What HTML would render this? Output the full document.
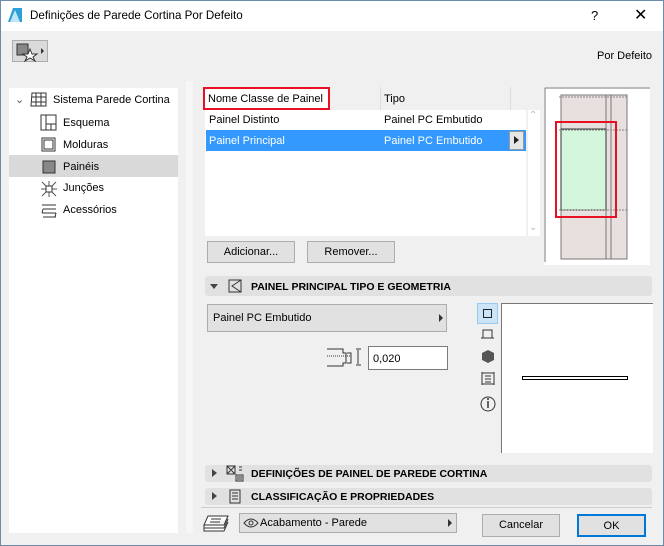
<!DOCTYPE html>
<html><head><meta charset="utf-8"><style>
*{margin:0;padding:0;box-sizing:border-box}
body{width:664px;height:546px;overflow:hidden;font-family:"Liberation Sans",sans-serif;font-size:11px;color:#000;background:#f0f0f0;position:relative}
.a{position:absolute}
.win{left:0;top:0;width:664px;height:546px;border:1px solid #6d8bab;}
.btn{position:absolute;background:#e1e1e1;border:1px solid #adadad;text-align:center;line-height:20px}
.sec{position:absolute;left:205px;width:447px;background:#e1e1e1;border-radius:3px}
.hd{position:absolute;font-weight:bold;font-size:10.5px}
.tri{position:absolute;width:0;height:0}
</style></head><body>
<div class="a win"></div>
<div class="a" style="left:1px;top:1px;width:662px;height:30px;background:#fff"></div>
<svg class="a" style="left:7px;top:7px" width="16" height="16"><path d="M1 15 L6 1 L15 1 L15 15 Z" fill="#2a9fd8"/><path d="M3 15 L8 3 L13 15" fill="#bfe6f7"/></svg>
<div class="a" style="left:30px;top:9px;font-size:11.6px">Definições de Parede Cortina Por Defeito</div>
<div class="a" style="left:591px;top:8px;font-size:13px">?</div>
<div class="a" style="left:634px;top:5px;font-size:16px">✕</div>
<div class="a" style="left:12px;top:40px;width:36px;height:22px;background:#dadada;border:1px solid #adadad"></div>
<svg class="a" style="left:14px;top:42px" width="34" height="20"><rect x="3" y="2" width="11" height="11" fill="#888" stroke="#333"/><path d="M16 7 L18 12 L23 12 L19 15 L21 19 L16 16 L11 19 L13 15 L9 12 L14 12Z" fill="#fff" stroke="#333"/><path d="M27 6 L30 9 L27 12Z" fill="#333"/></svg>
<div class="a" style="left:597px;top:50px">Por Defeito</div>
<div class="a" style="left:9px;top:88px;width:169px;height:445px;background:#fff"></div>
<div class="a" style="left:9px;top:155px;width:169px;height:22px;background:#d9d9d9"></div>
<div class="a" style="left:15px;top:93px;font-size:11px;color:#555">⌄</div>
<svg class="a" style="left:30px;top:92px" width="18" height="16"><path d="M2 1h14v13H1z M2 5h14 M2 10h14 M6 1v13 M11 1v13" fill="none" stroke="#333"/></svg>
<div class="a" style="left:53px;top:94px">Sistema Parede Cortina</div>
<svg class="a" style="left:40px;top:114px" width="18" height="18"><path d="M1 1h15v15H1z M6 1v15 M6 10h10 M11 10v6" fill="none" stroke="#333"/></svg>
<div class="a" style="left:63px;top:117px">Esquema</div>
<svg class="a" style="left:40px;top:136px" width="18" height="18"><path d="M2 2h13v13H2z M4 4h9v9H4z" fill="none" stroke="#333"/></svg>
<div class="a" style="left:63px;top:139px">Molduras</div>
<svg class="a" style="left:40px;top:158px" width="18" height="18"><rect x="3" y="3" width="12" height="12" fill="#888" stroke="#333"/></svg>
<div class="a" style="left:63px;top:161px">Painéis</div>
<svg class="a" style="left:40px;top:180px" width="18" height="18"><path d="M2 2l14 14 M16 2L2 16 M9 1v16 M1 9h16" stroke="#555"/><rect x="6" y="6" width="6" height="6" fill="#fff" stroke="#333"/></svg>
<div class="a" style="left:63px;top:182px">Junções</div>
<svg class="a" style="left:40px;top:202px" width="18" height="18"><path d="M2 3h14 M3 7h13 M2 11h14 M3 15h13 M3 7l-1 4 M16 11l-1 4" stroke="#333" fill="none"/></svg>
<div class="a" style="left:63px;top:204px">Acessórios</div>
<div class="a" style="left:186px;top:81px;width:7px;height:452px;background:#f6f6f6"></div>
<div class="a" style="left:205px;top:87px;width:321px;height:149px;background:#fff"></div>
<div class="a" style="left:205px;top:87px;width:334px;height:23px;background:#f0f0f0"></div>
<div class="a" style="left:380px;top:87px;width:1px;height:23px;background:#ddd"></div>
<div class="a" style="left:510px;top:87px;width:1px;height:23px;background:#ddd"></div>
<div class="a" style="left:203px;top:87px;width:127px;height:23px;border:2px solid #e81123;background:#fff"></div>
<div class="a" style="left:208px;top:93px">Nome Classe de Painel</div>
<div class="a" style="left:384px;top:93px">Tipo</div>
<div class="a" style="left:209px;top:114px">Painel Distinto</div>
<div class="a" style="left:384px;top:114px">Painel PC Embutido</div>
<div class="a" style="left:206px;top:130px;width:320px;height:21px;background:#3399ff"></div>
<div class="a" style="left:209px;top:135px;color:#fff">Painel Principal</div>
<div class="a" style="left:384px;top:135px;color:#fff">Painel PC Embutido</div>
<div class="a" style="left:509px;top:131px;width:15px;height:19px;background:#e6e6e6;border:1px solid #999"></div>
<div class="tri" style="left:514px;top:136px;border-left:5px solid #222;border-top:4px solid transparent;border-bottom:4px solid transparent"></div>
<div class="a" style="left:528px;top:110px;width:12px;height:126px;background:#fff"></div>
<div class="a" style="left:529px;top:110px;font-size:10px;color:#bbb">⌃</div>
<div class="a" style="left:529px;top:222px;font-size:10px;color:#bbb">⌄</div>
<svg class="a" style="left:544px;top:87px" width="106" height="178"><rect x="0" y="0" width="106" height="178" fill="#fff"/><path d="M1 175V1h105" stroke="#777" fill="none"/><rect x="17" y="8" width="66" height="164" fill="#e8e0df" stroke="#777"/><path d="M62 8v164 M67 8v164" stroke="#777"/><rect x="17" y="42" width="45" height="81" fill="#d4f6dd" stroke="#333"/><path d="M15 10h68 M15 43h68 M15 123h68" stroke="#888" stroke-dasharray="2 1"/><rect x="12" y="35" width="60" height="95" fill="none" stroke="#e81123" stroke-width="2"/></svg>
<div class="btn" style="left:207px;top:241px;width:88px;height:22px">Adicionar...</div>
<div class="btn" style="left:307px;top:241px;width:88px;height:22px">Remover...</div>
<div class="sec" style="top:276px;height:20px"></div>
<div class="tri" style="left:210px;top:284px;border-top:5px solid #444;border-left:4px solid transparent;border-right:4px solid transparent"></div>
<svg class="a" style="left:228px;top:279px" width="14" height="14"><path d="M1 1h12v12H1z M13 1L4 7l9 6" fill="none" stroke="#333"/></svg>
<div class="hd" style="left:251px;top:281px">PAINEL PRINCIPAL TIPO E GEOMETRIA</div>
<div class="btn" style="left:207px;top:304px;width:240px;height:28px;text-align:left;padding-left:5px;line-height:26px">Painel PC Embutido</div>
<div class="tri" style="left:439px;top:314px;border-left:4px solid #333;border-top:4px solid transparent;border-bottom:4px solid transparent"></div>
<svg class="a" style="left:326px;top:346px" width="36" height="22"><path d="M1 3h16v4h3v10h-3v3H1 M21 7h4v10h-4 M30 3h5 M30 19h5 M32 4v14" fill="none" stroke="#333"/><path d="M1 10h24" stroke="#333" stroke-dasharray="1 1"/></svg>
<div class="a" style="left:368px;top:346px;width:80px;height:24px;background:#fff;border:1px solid #7a7a7a;padding:6px 0 0 4px">0,020</div>
<div class="a" style="left:477px;top:303px;width:21px;height:21px;background:#cce4f7;border:1px solid #99c9ef"></div>
<div class="a" style="left:483px;top:309px;width:9px;height:9px;border:1px solid #222"></div>
<svg class="a" style="left:479px;top:328px" width="18" height="96"><path d="M4 2h9v8H4z M2 10h13" fill="none" stroke="#333"/><path d="M9 22l6 3v7l-6 3-6-3v-7z" fill="#555"/><path d="M3 44v13 M15 44v13 M3 45h12 M3 56h12 M6 48h6 M6 51h6 M6 54h6" stroke="#333" fill="none"/><circle cx="9" cy="76" r="7" fill="none" stroke="#333"/><path d="M9 73v7" stroke="#333" stroke-width="1.5"/><circle cx="9" cy="71" r="1" fill="#333"/></svg>
<div class="a" style="left:501px;top:303px;width:152px;height:150px;background:#fff;border-left:1px solid #777;border-top:1px solid #777"></div>
<div class="a" style="left:522px;top:376px;width:106px;height:4px;border:1px solid #000;background:#fff"></div>
<div class="sec" style="top:465px;height:17px"></div>
<div class="tri" style="left:212px;top:469px;border-left:5px solid #444;border-top:4px solid transparent;border-bottom:4px solid transparent"></div>
<svg class="a" style="left:226px;top:465px" width="18" height="17"><path d="M1 1h8v8H1z M1 1l8 8 M9 1l-8 8 M10 10h7v6h-7z M11 12h5 M11 14h5 M13 2h3 M13 5h3" fill="none" stroke="#333"/></svg>
<div class="hd" style="left:251px;top:468px">DEFINIÇÕES DE PAINEL DE PAREDE CORTINA</div>
<div class="sec" style="top:488px;height:17px"></div>
<div class="tri" style="left:212px;top:492px;border-left:5px solid #444;border-top:4px solid transparent;border-bottom:4px solid transparent"></div>
<svg class="a" style="left:229px;top:489px" width="12" height="15"><path d="M1 1h10v13H1z M3 4h6 M3 7h6 M3 10h6" fill="none" stroke="#333"/></svg>
<div class="hd" style="left:251px;top:491px">CLASSIFICAÇÃO E PROPRIEDADES</div>
<div class="a" style="left:201px;top:507px;width:451px;height:1px;background:#ccc"></div>
<svg class="a" style="left:202px;top:514px" width="28" height="18"><path d="M6 2h20l-4 9H2z M2 11v3h20l4-9 M2 14v3h20l4-9" fill="#fff" stroke="#333"/><path d="M9 5h10 M8 8h10" stroke="#333"/></svg>
<div class="btn" style="left:239px;top:513px;width:218px;height:20px;text-align:left;padding-left:20px;line-height:18px">Acabamento - Parede</div>
<svg class="a" style="left:243px;top:518px" width="16" height="10"><path d="M1 5q7-8 14 0q-7 8-14 0z" fill="none" stroke="#333"/><circle cx="8" cy="5" r="2" fill="none" stroke="#333"/></svg>
<div class="tri" style="left:448px;top:519px;border-left:4px solid #333;border-top:4px solid transparent;border-bottom:4px solid transparent"></div>
<div class="btn" style="left:482px;top:514px;width:78px;height:23px">Cancelar</div>
<div class="btn" style="left:577px;top:514px;width:69px;height:23px;border:2px solid #0078d7">OK</div>
</body></html>
